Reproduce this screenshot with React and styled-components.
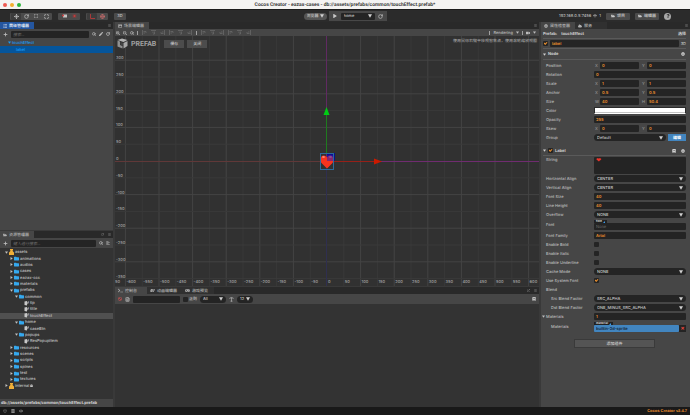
import React, { useId } from "react";
import styled, { createGlobalStyle, ThemeProvider } from "styled-components";
import {
  Box,
  FileText,
  Globe,
  Maximize,
  Move,
  Plus,
  RotateCw,
  Search,
  Type,
} from "lucide-react";
import {
  FaAlignLeft,
  FaBan,
  FaBars,
  FaBook,
  FaCog,
  FaCloud,
  FaDatabase,
  FaExpand,
  FaExternalLinkAlt,
  FaEye,
  FaFolder,
  FaFolderOpen,
  FaGamepad,
  FaImage,
  FaListUl,
  FaLock,
  FaPen,
  FaPlay,
  FaQuestion,
  FaSearchMinus,
  FaSearchPlus,
  FaTerminal,
  FaVideo,
  FaWifi,
} from "react-icons/fa";

const theme = {
  panel: "#464646",
  dark: "#333333",
  bar: "#2b2b2b",
  input: "#242424",
  text: "#bcbcbc",
  orange: "#f0922e",
  blue: "#4285bf",
  line: "#5a5a5a",
};

const GlobalStyle = createGlobalStyle`
  * {
    box-sizing: border-box;
  }
  body {
    margin: 0;
    background: #2b2b2b;
  }
  body, button, input, select, textarea {
    font-family: Inter, "Noto Sans CJK SC", sans-serif;
    font-size: 4px;
    font-weight: 500;
    line-height: 6px;
    text-rendering: geometricPrecision;
  }
  button, input, select, textarea {
    margin: 0;
    padding: 0;
    border: none;
    outline: none;
    color: inherit;
  }
`;

const Window = styled.div`
  height: 100vh;
  display: flex;
  flex-direction: column;
  color: ${({ theme }) => theme.text};
  background: ${({ theme }) => theme.bar};
  overflow: hidden;
  white-space: nowrap;
`;

const TitleBar = styled.header`
  flex: none;
  height: 9px;
  display: grid;
  grid-template-columns: 1fr auto 1fr;
  align-items: center;
  background: #f4f3f2;
  color: #3a3a3a;
  font-family: Roboto, sans-serif;
  font-size: 5px;
  font-weight: bold;
`;

const Lights = styled.div`
  display: flex;
  gap: 3px;
  padding-left: 3px;
`;

const Light = styled.span`
  width: 4px;
  height: 4px;
  border-radius: 50%;
  background: ${({ $color }) => $color};
`;

const Toolbar = styled.div`
  flex: none;
  height: 13px;
  display: grid;
  grid-template-columns: 1fr auto 1fr;
  align-items: center;
  padding: 0 10px;
  border-top: 1px solid #1c1c1c;
`;

const ToolSide = styled.div`
  display: flex;
  align-items: center;
  justify-content: ${({ $end }) => ($end ? "flex-end" : "flex-start")};
  gap: ${({ $end }) => ($end ? 5 : 6)}px;
`;

const ToolGroup = styled.div`
  display: flex;
  padding: 0 1px;
  background: #4b4b4b;
  border-radius: 1px;
`;

const ToolButton = styled.button`
  display: flex;
  align-items: center;
  justify-content: center;
  width: ${({ $wide }) => ($wide ? 24 : 10)}px;
  height: 7px;
  gap: 2px;
  border-radius: 1px;
  background: ${({ $on }) => ($on ? "#3c3c3c" : "#4b4b4b")};
  color: ${({ $color }) => $color || "#c8c8c8"};
`;

const PlayBar = styled.div`
  display: flex;
  align-items: center;
  gap: 2px;
`;

const PlayGroup = styled.div`
  display: flex;
  align-items: center;
  height: 10px;
  padding: 0 1px;
  background: #484848;
`;

const PlayButton = styled.button`
  display: flex;
  align-items: center;
  justify-content: center;
  width: 11px;
  height: 8px;
  background: none;
  color: #c8c8c8;
`;

const SelectBox = styled.div`
  display: grid;
  align-items: center;
  flex: ${({ $width }) => ($width ? "none" : "1")};
  width: ${({ $width }) => ($width ? `${$width}px` : "auto")};
  min-width: 0;
  > * {
    grid-area: 1 / 1;
  }
  svg {
    justify-self: end;
    margin-right: 3px;
    pointer-events: none;
    fill: #d0d0d0;
  }
`;

const SelectInput = styled.select`
  appearance: none;
  width: 100%;
  height: 7px;
  padding-left: 3px;
  border-radius: ${({ $square }) => ($square ? 1 : 4)}px;
  background: ${({ $light, theme }) => ($light ? "#555555" : theme.input)};
  color: #c4c4c4;
`;

const HelpButton = styled.button`
  width: 7px;
  height: 7px;
  margin-right: 9px;
  display: grid;
  place-items: center;
  border-radius: 50%;
  background: #a8a8a8;
  color: #2b2b2b;
`;

const Address = styled.span`
  display: flex;
  align-items: center;
  gap: 2px;
`;

const Workspace = styled.div`
  flex: 1;
  min-height: 0;
  display: grid;
  grid-template-columns: 113px minmax(0, 1fr) 149px;
  gap: 2px;
  background: #393939;
`;

const Column = styled.div`
  min-width: 0;
  min-height: 0;
  display: flex;
  flex-direction: column;
  gap: 1px;
`;

const Panel = styled.section`
  flex: ${({ $grow }) => $grow || 1} 1 0;
  min-height: 0;
  display: flex;
  flex-direction: column;
  background: ${({ $dark, theme }) => ($dark ? theme.dark : theme.panel)};
`;

const TabBar = styled.div`
  flex: none;
  height: 7px;
  display: flex;
  align-items: center;
  background: #292929;
  color: #707070;
`;

const Tab = styled.button`
  min-width: 32px;
  height: 7px;
  display: flex;
  align-items: center;
  gap: 2px;
  padding: 0 5px 0 3px;
  background: ${({ $active, $focus, theme }) =>
    $focus ? "#2456a0" : $active ? theme.panel : "#303030"};
  color: ${({ $focus }) => ($focus ? "#f0f4fa" : "#b0b0b0")};
`;

const TabTools = styled.div`
  display: flex;
  align-items: center;
  gap: 4px;
  margin-left: auto;
  padding-right: 2px;
`;

const PanelBar = styled.div`
  flex: none;
  height: ${({ $thin }) => ($thin ? 7 : 10)}px;
  display: flex;
  align-items: center;
  gap: 3px;
  padding: 0 3px 0 ${({ $thin }) => ($thin ? 1 : 3)}px;
  background: ${({ theme }) => theme.panel};
  color: #bcbcbc;
`;

const IconStrip = styled.div`
  display: flex;
  align-items: center;
  gap: 4px;
  margin-right: auto;
`;

const StripLine = styled.span`
  width: 1px;
  height: 4px;
  background: #a0a0a0;
`;

const IconButton = styled.button`
  display: flex;
  flex: none;
  background: none;
  color: ${({ $color }) => $color || "inherit"};
`;

const Field = styled.input`
  flex: ${({ $width }) => ($width ? "none" : "1")};
  width: ${({ $width }) => ($width ? `${$width}px` : "auto")};
  min-width: 0;
  height: 7px;
  padding: 0 2px;
  border-radius: 1px;
  background: ${({ theme }) => theme.input};
  color: ${({ theme }) => theme.orange};
  font-weight: 600;
  &::placeholder {
    color: #707070;
    font-weight: normal;
  }
`;

const SearchField = styled(Field)`
  color: ${({ theme }) => theme.text};
  &::placeholder {
    font-style: italic;
  }
`;

const NodeRow = styled.div`
  height: 7px;
  display: flex;
  align-items: center;
  gap: 1px;
  padding-left: ${({ $level }) => 8 + $level * 4}px;
  background: ${({ $selected }) => ($selected ? "#05559b" : "transparent")};
  color: #1a9cf6;
`;

const Assets = styled.div`
  flex: none;
  height: 140px;
  display: grid;
  grid-auto-rows: 1fr;
  margin-top: 1px;
`;

const AssetRow = styled.div`
  display: flex;
  align-items: center;
  gap: 1px;
  min-height: 0;
  padding-left: ${({ $level }) => 5 + $level * 5}px;
  background: ${({ $selected }) => ($selected ? "#505050" : "transparent")};
  color: #c0c0c0;
`;

const ArrowSlot = styled.span`
  width: 3px;
  display: flex;
`;

const PathBar = styled.div`
  flex: none;
  height: 8px;
  margin-top: auto;
  padding: 1px;
  background: ${({ theme }) => theme.panel};
  color: #d8d8d8;
  font-weight: bold;
`;

const SceneView = styled.div`
  flex: 1;
  min-height: 0;
  position: relative;
  background: #313131;
`;

const SceneCanvas = styled.svg`
  display: block;
  width: 100%;
  height: 100%;
  fill: #a4a4a4;
`;

const SceneOverlay = styled.div`
  position: absolute;
  top: 2px;
  left: 2px;
  right: 2px;
  display: flex;
  align-items: center;
  gap: 3px;
`;

const PrefabMark = styled.strong`
  font-family: Roboto, sans-serif;
  font-size: 7px;
  line-height: 10px;
  color: #a0a0a0;
  margin-right: 5px;
`;

const SceneButton = styled.button`
  width: 20px;
  height: 8px;
  background: #4c4c4c;
  color: #c8c8c8;
`;

const Hint = styled.span`
  margin-left: auto;
  align-self: flex-start;
  color: #9a9a9a;
`;

const FilterLabel = styled.label`
  display: flex;
  align-items: center;
  gap: 1px;
`;

const Inspector = styled.div`
  display: flex;
  flex-direction: column;
  padding: 0 4px 0 2px;
`;

const Head = styled.div`
  display: flex;
  align-items: center;
  gap: 2px;
  height: ${({ $tall }) => ($tall ? 11 : 10)}px;
  border-bottom: 1px solid ${({ theme }) => theme.line};
  color: #d0d0d0;
  font-weight: ${({ $plain }) => ($plain ? "normal" : "bold")};
`;

const PrefabName = styled.span`
  margin-left: 2px;
`;

const Spacer = styled.span`
  flex: 1;
`;

const HeadIcons = styled.span`
  display: flex;
  gap: 5px;
  padding-right: 1px;
  margin-left: auto;
`;

const Props = styled.div`
  display: flex;
  flex-direction: column;
  padding: ${({ $top }) => $top || 0}px 0 0 3px;
  margin-bottom: ${({ $bottom }) => $bottom || 0}px;
`;

const PropRow = styled.div`
  display: grid;
  grid-template-columns: 48px minmax(0, 1fr);
  align-items: center;
  height: ${({ $height }) => $height || 9}px;
`;

const PropName = styled.label`
  padding-left: ${({ $nested }) => ($nested ? 5 : 0)}px;
  align-self: ${({ $top }) => ($top ? "start" : "center")};
  margin-top: ${({ $top }) => ($top ? 1 : 0)}px;
`;

const FoldName = styled(PropName)`
  display: flex;
  align-items: center;
  gap: 1px;
  margin-left: -4px;
`;

const PropValue = styled.div`
  display: flex;
  align-items: center;
  gap: ${({ $gap }) => $gap || 0}px;
`;

const Axis = styled.label`
  flex: 1;
  min-width: 0;
  display: flex;
  align-items: center;
  color: #989898;
`;

const AxisName = styled.span`
  width: 6px;
  padding-left: 1px;
`;

const TextArea = styled.textarea`
  width: 100%;
  height: 17px;
  padding: 1px 2px;
  border-radius: 1px;
  background: ${({ theme }) => theme.input};
  color: #f0342a;
  resize: none;
  display: block;
  font-family: "DejaVu Sans", sans-serif;
  font-size: 6px;
`;

const Check = styled.input`
  appearance: none;
  flex: none;
  width: 5px;
  height: 5px;
  display: grid;
  place-items: center;
  border-radius: 1px;
  background: ${({ theme }) => theme.input};
  &:checked::after {
    content: "";
    width: 4px;
    height: 3px;
    background: ${({ theme }) => theme.orange};
    clip-path: polygon(0 50%, 20% 20%, 40% 50%, 80% 0, 100% 20%, 45% 100%);
  }
`;

const Swatch = styled.button`
  width: 100%;
  height: 7px;
  background: #ffffff;
  border: 1px solid #2a2a2a;
  border-bottom: 1px solid #ffffff;
  box-shadow: inset 0 -1px 0 #c4c4c4;
`;

const EditButton = styled.button`
  width: 18px;
  height: 7px;
  background: ${({ theme }) => theme.blue};
  color: #ffffff;
  font-weight: bold;
`;

const AssetField = styled.div`
  display: flex;
  flex-direction: column;
`;

const AssetTag = styled.span`
  align-self: flex-start;
  display: flex;
  align-items: center;
  gap: 1px;
  height: 3px;
  padding: 0 2px;
  background: #222222;
  color: #dcdcdc;
  font-size: 3px;
  line-height: 3px;
  font-weight: bold;
`;

const AssetInput = styled(Field)`
  flex: 1 0 7px;
  background: ${({ $filled, theme }) => ($filled ? theme.blue : theme.input)};
  color: #14263a;
`;

const RemoveButton = styled.button`
  width: 7px;
  height: 7px;
  background: ${({ theme }) => theme.input};
  color: #f0483e;
  font-size: 6px;
  font-weight: bold;
`;

const AddButton = styled.button`
  width: 81px;
  height: 9px;
  margin: 6px auto 0;
  background: #545454;
  border: 1px solid #3a3a3a;
  color: #d0d0d0;
`;

const StatusBar = styled.footer`
  flex: none;
  height: 8px;
  display: flex;
  align-items: center;
  gap: 4px;
  padding: 0 3px;
  background: #191919;
  color: #8a8a8a;
`;

const Version = styled.strong`
  margin-left: auto;
  font-family: "Liberation Sans", sans-serif;
  color: ${({ theme }) => theme.orange};
`;

const Triangle = ({ open = true, size = 3 }) => (
  <svg width={size} height={size} viewBox="0 0 6 6" fill="currentColor">
    <path d={open ? "M0 1h6L3 5.5z" : "M1 0v6l4.5-3z"} />
  </svg>
);

const DropDown = ({ value, width, label, id, ...rest }) => (
  <SelectBox $width={width}>
    <SelectInput id={id} aria-label={label} defaultValue={value} {...rest}>
      <option>{value}</option>
    </SelectInput>
    <svg width="4" height="4" viewBox="0 0 6 6">
      <path d="M0 0.5h6L3 5.5z" />
    </svg>
  </SelectBox>
);

const AssetIcon = ({ kind }) => {
  if (kind === "db") {
    return (
      <svg width="5" height="6" viewBox="0 0 10 12" fill="#efae38">
        <path d="M2 0h6v2l-1 1 1 2 2 2v5H0V7l2-2 1-2-1-1z" />
      </svg>
    );
  }
  if (kind === "folder") {
    return <FaFolder size={5} color="#35a8ee" />;
  }
  return (
    <svg width="5" height="5" viewBox="0 0 10 10">
      <path d="M1 1l5-1v9l-5-1z" fill="#c8c8c8" />
      <path d="M6 2l4-2v4L6 7z" fill="#8c8c8c" />
    </svg>
  );
};

const ASSETS = [
  ["assets", 0, "db", "open"],
  ["animations", 1, "folder", "closed"],
  ["audios", 1, "folder", "closed"],
  ["cases", 1, "folder", "closed"],
  ["eazax-ccc", 1, "folder", "closed"],
  ["materials", 1, "folder", "closed"],
  ["prefabs", 1, "folder", "open"],
  ["common", 2, "folder", "open"],
  ["tip", 3, "prefab"],
  ["title", 3, "prefab"],
  ["touchEffect", 3, "prefab"],
  ["home", 2, "folder", "open"],
  ["caseBtn", 3, "prefab"],
  ["popups", 2, "folder", "open"],
  ["ResPopupItem", 3, "prefab"],
  ["resources", 1, "folder", "closed"],
  ["scenes", 1, "folder", "closed"],
  ["scripts", 1, "folder", "closed"],
  ["spines", 1, "folder", "closed"],
  ["test", 1, "folder", "closed"],
  ["textures", 1, "folder", "closed"],
  ["internal", 0, "db", "closed"],
];

// scene coordinates: 50 units are one grid step
const ORIGIN = { x: 212, y: 125 };
const STEP = 16.8;
const COLUMNS = Array.from({ length: 25 }, (_, i) => i - 12);
const ROWS = Array.from({ length: 14 }, (_, i) => i - 7);

const Scene = () => (
  <SceneCanvas>
    {COLUMNS.map((n) => {
      const x = ORIGIN.x + n * STEP;
      return (
        <g key={n}>
          {n !== 0 && (
            <line
              x1={x}
              x2={x}
              y1="0"
              y2="100%"
              stroke={n % 2 ? "#393939" : "#444444"}
            />
          )}
          <text x={x + 1} y="247">
            {n * 50}
          </text>
        </g>
      );
    })}
    <text x="0" y="247">
      50
    </text>
    {ROWS.map((n) => {
      const y = ORIGIN.y - n * STEP;
      return (
        <g key={n}>
          {n !== 0 && (
            <line
              x1="0"
              x2="100%"
              y1={y}
              y2={y}
              stroke={n % 2 ? "#3a3a3a" : "#444444"}
            />
          )}
          <text x="1" y={y - 1}>
            {n * 50}
          </text>
        </g>
      );
    })}
    <line x1="0" x2="212" y1="125.5" y2="125.5" stroke="#603838" />
    <line x1="212" x2="100%" y1="125.5" y2="125.5" stroke="#702c70" />
    <line x1="211.5" x2="211.5" y1="0" y2="125" stroke="#602a62" />
    <line x1="211.5" x2="211.5" y1="125" y2="100%" stroke="#2f2f50" />
    <rect x="212" y="117" width="8" height="8" fill="#0d0d8c" />
    <path
      d="M212 132.500L206.500 127C204.500 124.500 205.500 119.500 208.500 119.500C210.500 119.500 211.500 120.500 212 121.500C212.500 120.500 213.500 119.500 215.500 119.500C218.500 119.500 219.500 124.500 217.500 127Z"
      fill="#f5331f"
    />
    <ellipse cx="208.500" cy="121" rx="1.500" ry="0.800" fill="#ff9c90" />
    <ellipse cx="215.500" cy="121" rx="1.500" ry="0.800" fill="#ff9c90" />
    <rect x="212" y="119" width="6" height="6" fill="#1a1ac0" opacity="0.5" />
    <rect
      x="205.5"
      y="117.5"
      width="13"
      height="16"
      fill="none"
      stroke="#2c6a9c"
    />
    <line x1="211.5" x2="211.5" y1="79" y2="117" stroke="#1f7a1f" />
    <path d="M211.500 71l3 8h-6z" fill="#00cc14" />
    <line x1="219" x2="259" y1="125.5" y2="125.5" stroke="#962018" />
    <path d="M267 125.500l-8 -3v6z" fill="#cc1a00" />
  </SceneCanvas>
);

// one glyph of the align / distribute tool strip
const AlignIcon = ({ turn = 0 }) => (
  <svg width="5" height="5" viewBox="0 0 10 10" fill="none" stroke="#7c7c7c">
    <g transform={`rotate(${turn} 5 5)`}>
      <path d="M1 0v10M3 3h5M3 6h3" />
      <path d="M8 3v3" />
    </g>
  </svg>
);

const CurveIcon = () => (
  <svg width="5" height="5" viewBox="0 0 10 10" fill="none" stroke="#b0b0b0">
    <path d="M0 8L3 2v6l3-6v6l4-6" strokeWidth="1.5" />
  </svg>
);

const CubeLogo = () => (
  <svg width="11" height="11" viewBox="0 0 22 22">
    <path d="M1 4l9-3 11 3-8 4z" fill="#b4b4b4" />
    <path d="M1 5l5 2v7l5 2v5L1 17z" fill="#909090" />
    <path d="M13 10l8-4v10l-8 5z" fill="#a8a8a8" />
    <path d="M7 8l5 2v6l-5-2z" fill="#444444" />
  </svg>
);

const LinkMark = () => (
  <svg width="2" height="2" viewBox="0 0 4 4">
    <path d="M0 4L4 0v4z" fill="#3c9ae8" />
  </svg>
);

const Row = ({ name, nested, height, children }) => {
  const id = useId();
  return (
    <PropRow $height={height}>
      <PropName htmlFor={id} $nested={nested} $top={height > 12}>
        {name}
      </PropName>
      {children(id)}
    </PropRow>
  );
};

const TextRow = ({ name, value }) => (
  <Row name={name}>
    {(id) => (
      <PropValue>
        <Field id={id} defaultValue={value} />
      </PropValue>
    )}
  </Row>
);

const PairRow = ({ name, axes = ["X", "Y"], values }) => (
  <PropRow>
    <span>{name}</span>
    <PropValue $gap={2}>
      {axes.map((axis, i) => (
        <Axis key={axis}>
          <AxisName>{axis}</AxisName>
          <Field defaultValue={values[i]} />
        </Axis>
      ))}
    </PropValue>
  </PropRow>
);

const SelectRow = ({ name, value, nested }) => (
  <Row name={name} nested={nested}>
    {(id) => <DropDown id={id} value={value} />}
  </Row>
);

const CheckRow = ({ name, checked }) => (
  <Row name={name}>
    {(id) => <Check id={id} type="checkbox" defaultChecked={checked} />}
  </Row>
);

const TopBar = () => (
  <Toolbar>
    <ToolSide>
      <ToolGroup>
        <ToolButton $on aria-label="move">
          <Move size={5} strokeWidth={3} />
        </ToolButton>
        <ToolButton aria-label="rotate">
          <RotateCw size={5} strokeWidth={3} />
        </ToolButton>
        <ToolButton aria-label="scale">
          <FaExpand size={4} />
        </ToolButton>
        <ToolButton aria-label="rect">
          <Maximize size={5} strokeWidth={3} />
        </ToolButton>
      </ToolGroup>
      <ToolGroup>
        <ToolButton aria-label="pivot">
          <svg width="5" height="4" viewBox="0 0 10 8">
            <path d="M2 1h8v6H2z" fill="#c4c4c4" />
            <circle cx="2" cy="3" r="2" fill="#d03a3a" />
          </svg>
        </ToolButton>
        <ToolButton aria-label="center">
          <svg width="5" height="4" viewBox="0 0 10 8">
            <path d="M1 0h8v8H1z" fill="#6a4444" />
            <circle cx="5" cy="4" r="2" fill="#d03a3a" />
          </svg>
        </ToolButton>
      </ToolGroup>
      <ToolGroup>
        <ToolButton $on aria-label="local">
          <svg width="5" height="5" viewBox="0 0 10 10" fill="none">
            <path d="M1 0v9h9" stroke="#a83a3a" strokeWidth="2" />
          </svg>
        </ToolButton>
        <ToolButton $color="#c46a6a" aria-label="global">
          <Globe size={5} strokeWidth={3} />
        </ToolButton>
      </ToolGroup>
      <ToolGroup>
        <ToolButton>3D</ToolButton>
      </ToolGroup>
    </ToolSide>
    <PlayBar>
      <DropDown value="浏览器" label="preview" width={23} $light />
      <PlayGroup>
        <PlayButton aria-label="play">
          <FaPlay size={4} />
        </PlayButton>
        <DropDown value="home" label="scene" width={34} $square />
        <PlayButton aria-label="reload">
          <RotateCw size={5} strokeWidth={3} />
        </PlayButton>
      </PlayGroup>
    </PlayBar>
    <ToolSide $end>
      <Address>
        192.168.0.5:7456 <FaWifi size={4} /> 1
      </Address>
      <ToolButton $wide>
        <FaFolderOpen size={4} />
        项目
      </ToolButton>
      <ToolButton $wide>
        <FaFolderOpen size={4} />
        编辑器
      </ToolButton>
      <HelpButton aria-label="help">
        <FaQuestion size={4} />
      </HelpButton>
    </ToolSide>
  </Toolbar>
);

const HierarchyPanel = () => (
  <Panel $grow={208}>
    <TabBar>
      <Tab $focus>
        <FaListUl size={4} />
        层级管理器
      </Tab>
      <TabTools>
        <FaBars size={3} />
      </TabTools>
    </TabBar>
    <PanelBar>
      <IconButton aria-label="create node">
        <Plus size={5} strokeWidth={4} />
      </IconButton>
      <SearchField placeholder="搜索..." aria-label="search nodes" />
      <IconButton aria-label="search">
        <Search size={4} strokeWidth={4} />
      </IconButton>
      <IconButton aria-label="edit">
        <FaPen size={4} />
      </IconButton>
      <IconButton aria-label="refresh">
        <RotateCw size={4} strokeWidth={4} />
      </IconButton>
    </PanelBar>
    <NodeRow $level={0}>
      <Triangle />
      touchEffect
    </NodeRow>
    <NodeRow $level={2} $selected>
      label
    </NodeRow>
  </Panel>
);

const AssetsPanel = () => (
  <Panel $grow={176} $dark>
    <TabBar>
      <Tab $active>
        <FaFolderOpen size={4} />
        资源管理器
      </Tab>
      <TabTools>
        <RotateCw size={3} strokeWidth={4} />
        <FaBars size={3} />
      </TabTools>
    </TabBar>
    <PanelBar>
      <IconButton aria-label="create asset">
        <Plus size={5} strokeWidth={4} />
      </IconButton>
      <SearchField placeholder="键入进行搜索..." aria-label="search assets" />
      <IconButton aria-label="search">
        <Search size={4} strokeWidth={4} />
      </IconButton>
      <IconButton aria-label="sort">
        <FaAlignLeft size={4} />
      </IconButton>
    </PanelBar>
    <Assets>
      {ASSETS.map(([name, level, kind, fold]) => (
        <AssetRow key={name} $level={level} $selected={name === "touchEffect"}>
          <ArrowSlot>{fold && <Triangle open={fold === "open"} />}</ArrowSlot>
          <AssetIcon kind={kind} />
          {name}
          {name === "internal" && <FaLock size={3} />}
        </AssetRow>
      ))}
    </Assets>
    <PathBar>db://assets/prefabs/common/touchEffect.prefab</PathBar>
  </Panel>
);

const ScenePanel = () => (
  <Panel $grow={264}>
    <TabBar>
      <Tab $active>
        <FaImage size={4} />
        场景编辑器
      </Tab>
      <TabTools>
        <FaBars size={3} />
      </TabTools>
    </TabBar>
    <PanelBar $thin>
      <FaSearchPlus size={4} />
      <FaSearchMinus size={4} />
      <Search size={4} strokeWidth={4} />
      <IconStrip>
        <StripLine />
        {[0, 90, 180, 0, 90, 180].map((turn, i) => (
          <AlignIcon key={i} turn={turn} />
        ))}
        <StripLine />
        {[0, 90, 180, 0, 90, 180].map((turn, i) => (
          <AlignIcon key={i} turn={turn} />
        ))}
      </IconStrip>
      <StripLine />
      <span>Rendering</span>
      <Triangle />
      <StripLine />
      <FaVideo size={4} />
      <Triangle />
    </PanelBar>
    <SceneView>
      <Scene />
      <SceneOverlay>
        <CubeLogo />
        <PrefabMark>PREFAB</PrefabMark>
        <SceneButton>保存</SceneButton>
        <SceneButton>关闭</SceneButton>
        <Hint>使用鼠标右键平移视窗焦点，使用滚轮缩放视图</Hint>
      </SceneOverlay>
    </SceneView>
  </Panel>
);

const ConsolePanel = () => (
  <Panel $grow={120} $dark>
    <TabBar>
      <Tab $active>
        <FaTerminal size={5} />
        控制台
      </Tab>
      <Tab>
        <CurveIcon />
        动画编辑器
      </Tab>
      <Tab>
        <FaGamepad size={5} />
        游戏预览
      </Tab>
      <TabTools>
        <FaExternalLinkAlt size={3} />
        <FaBars size={3} />
      </TabTools>
    </TabBar>
    <PanelBar>
      <IconButton $color="#d05050" aria-label="clear">
        <FaBan size={4} />
      </IconButton>
      <IconButton aria-label="open log">
        <FileText size={5} strokeWidth={3} />
      </IconButton>
      <SearchField $width={47} aria-label="filter" />
      <FilterLabel>
        <Check type="checkbox" />
        正则
      </FilterLabel>
      <DropDown value="All" label="level" width={26} />
      <Type size={5} strokeWidth={3} />
      <DropDown value="12" label="font size" width={16} />
      <Spacer />
      <FaBook size={4} />
    </PanelBar>
  </Panel>
);

const InspectorPanel = () => (
  <Panel>
    <TabBar>
      <Tab $active>
        <FaCog size={4} />
        属性检查器
      </Tab>
      <Tab>
        <FaCloud size={4} />
        服务
      </Tab>
      <TabTools>
        <FaBars size={3} />
      </TabTools>
    </TabBar>
    <Inspector>
      <Head>
        <span>Prefab:</span>
        <PrefabName>touchEffect</PrefabName>
        <Spacer />
        选择
      </Head>
      <Head $plain>
        <Check type="checkbox" defaultChecked aria-label="active" />
        <Field defaultValue="label" aria-label="node name" />
        3D
      </Head>
      <Head $tall>
        <Triangle />
        Node
        <HeadIcons>
          <FaCog size={4} />
        </HeadIcons>
      </Head>
      <Props $top={1} $bottom={4}>
        <PairRow name="Position" values={[0, 0]} />
        <TextRow name="Rotation" value="0" />
        <PairRow name="Scale" values={[1, 1]} />
        <PairRow name="Anchor" values={[0.5, 0.5]} />
        <PairRow name="Size" axes={["W", "H"]} values={[40, 50.4]} />
        <Row name="Color">{(id) => <Swatch id={id} />}</Row>
        <TextRow name="Opacity" value="255" />
        <PairRow name="Skew" values={[0, 0]} />
        <Row name="Group">
          {(id) => (
            <PropValue $gap={2}>
              <DropDown id={id} value="Default" />
              <EditButton>编辑</EditButton>
            </PropValue>
          )}
        </Row>
      </Props>
      <Head>
        <Triangle />
        <Check type="checkbox" defaultChecked aria-label="enable label" />
        Label
        <HeadIcons>
          <FaBook size={4} />
          <FaCog size={4} />
        </HeadIcons>
      </Head>
      <Props>
        <Row name="String" height={18}>
          {(id) => <TextArea id={id} defaultValue="❤" />}
        </Row>
        <SelectRow name="Horizontal Align" value="CENTER" />
        <SelectRow name="Vertical Align" value="CENTER" />
        <TextRow name="Font Size" value="40" />
        <TextRow name="Line Height" value="40" />
        <SelectRow name="Overflow" value="NONE" />
        <Row name="Font" height={12}>
          {(id) => (
            <AssetField>
              <AssetTag>
                font <LinkMark />
              </AssetTag>
              <AssetInput id={id} placeholder="None" />
            </AssetField>
          )}
        </Row>
        <TextRow name="Font Family" value="Arial" />
        <CheckRow name="Enable Bold" />
        <CheckRow name="Enable Italic" />
        <CheckRow name="Enable Underline" />
        <SelectRow name="Cache Mode" value="NONE" />
        <CheckRow name="Use System Font" checked />
        <PropRow>
          <span>Blend</span>
        </PropRow>
        <SelectRow nested name="Src Blend Factor" value="SRC_ALPHA" />
        <SelectRow
          nested
          name="Dst Blend Factor"
          value="ONE_MINUS_SRC_ALPHA"
        />
        <PropRow>
          <FoldName htmlFor="material-count">
            <Triangle />
            Materials
          </FoldName>
          <PropValue>
            <Field id="material-count" defaultValue="1" />
          </PropValue>
        </PropRow>
        <Row nested name="Materials" height={12}>
          {(id) => (
            <AssetField>
              <AssetTag>
                material <LinkMark />
              </AssetTag>
              <PropValue>
                <AssetInput id={id} $filled defaultValue="builtin-2d-sprite" />
                <RemoveButton aria-label="remove">×</RemoveButton>
              </PropValue>
            </AssetField>
          )}
        </Row>
      </Props>
      <AddButton>添加组件</AddButton>
    </Inspector>
  </Panel>
);

const App = () => (
  <ThemeProvider theme={theme}>
    <GlobalStyle />
    <Window>
      <TitleBar>
        <Lights>
          <Light $color="#ee5a52" />
          <Light $color="#f2ae2e" />
          <Light $color="#2bb53c" />
        </Lights>
        <span>
          Cocos Creator - eazax-cases -
          db://assets/prefabs/common/touchEffect.prefab*
        </span>
      </TitleBar>
      <TopBar />
      <Workspace>
        <Column>
          <HierarchyPanel />
          <AssetsPanel />
        </Column>
        <Column>
          <ScenePanel />
          <ConsolePanel />
        </Column>
        <Column>
          <InspectorPanel />
        </Column>
      </Workspace>
      <StatusBar>
        <Box size={4} />
        <FaDatabase size={4} />
        <FaEye size={4} />
        <Version>Cocos Creator v2.4.7</Version>
      </StatusBar>
    </Window>
  </ThemeProvider>
);

export default App;
